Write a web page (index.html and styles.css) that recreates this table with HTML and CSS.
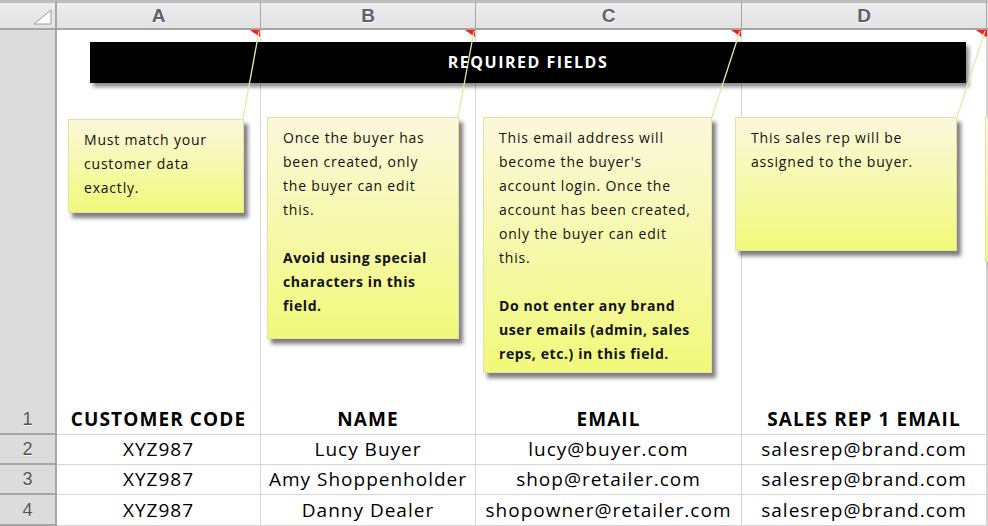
FILE: index.html
```html
<!DOCTYPE html>
<html>
<head>
<meta charset="utf-8">
<link rel="stylesheet" href="styles.css">
</head>
<body>
<div class="sheet">
  <div class="grid">
    <div class="ch corner">
      <svg class="corner-tri" width="20" height="16" viewBox="0 0 20 16"><polygon points="19,1 19,15 2,15" fill="#ffffff" stroke="#9a9a9a" stroke-width="1"/></svg>
    </div>
    <div class="ch">A</div>
    <div class="ch">B</div>
    <div class="ch">C</div>
    <div class="ch">D</div>
    <div class="ch ch-last"></div>

    <div class="rh">1</div>
    <div class="cell head flag">CUSTOMER CODE</div>
    <div class="cell head flag">NAME</div>
    <div class="cell head flag">EMAIL</div>
    <div class="cell head flag">SALES REP 1 EMAIL</div>
    <div class="cell head flag"></div>

    <div class="rh">2</div>
    <div class="cell">XYZ987</div>
    <div class="cell">Lucy Buyer</div>
    <div class="cell">lucy@buyer.com</div>
    <div class="cell">salesrep@brand.com</div>
    <div class="cell"></div>

    <div class="rh">3</div>
    <div class="cell">XYZ987</div>
    <div class="cell">Amy Shoppenholder</div>
    <div class="cell">shop@retailer.com</div>
    <div class="cell">salesrep@brand.com</div>
    <div class="cell"></div>

    <div class="rh">4</div>
    <div class="cell">XYZ987</div>
    <div class="cell">Danny Dealer</div>
    <div class="cell">shopowner@retailer.com</div>
    <div class="cell">salesrep@brand.com</div>
    <div class="cell"></div>
  </div>

  <div class="banner">REQUIRED FIELDS</div>

  <svg class="connectors" width="988" height="526" viewBox="0 0 988 526">
    <line x1="259" y1="31" x2="243" y2="119"/>
    <line x1="474" y1="31" x2="458" y2="117"/>
    <line x1="740" y1="31" x2="712" y2="117"/>
    <line x1="985" y1="31" x2="957" y2="117"/>
  </svg>

  <div class="note note-a">Must match your<br>customer data<br>exactly.</div>
  <div class="note note-b">Once the buyer has<br>been created, only<br>the buyer can edit<br>this.<br><br><b>Avoid using special<br>characters in this<br>field.</b></div>
  <div class="note note-c">This email address will<br>become the buyer's<br>account login. Once the<br>account has been created,<br>only the buyer can edit<br>this.<br><br><b>Do not enter any brand<br>user emails (admin, sales<br>reps, etc.) in this field.</b></div>
  <div class="note note-d">This sales rep will be<br>assigned to the buyer.</div>
  <div class="note note-e"></div>
</div>
</body>
</html>
```

FILE: styles.css
```css
html, body {
  margin: 0;
  padding: 0;
  background: #ffffff;
}

.sheet {
  position: relative;
  width: 988px;
  height: 526px;
  overflow: hidden;
  font-family: "Open Sans", "Lato", sans-serif;
}

.grid {
  display: grid;
  grid-template-columns: 57px 204px 215px 266px 245px 1fr;
  grid-template-rows: 30px 405px 30px 30px 31px;
}

.ch {
  box-sizing: border-box;
  border-top: 3px solid #bcbcbc;
  border-bottom: 2px solid #a6a6a6;
  border-right: 1px solid #a6a6a6;
  background: linear-gradient(#ededed, #e2e2e2);
  display: flex;
  align-items: center;
  justify-content: center;
  font-family: "Liberation Sans", "DejaVu Sans", sans-serif;
  font-size: 19px;
  font-weight: 700;
  color: #5e616b;
  text-shadow: 0 1px 0 #ffffff;
}

.ch.corner {
  border-right: 2px solid #a6a6a6;
  position: relative;
  justify-content: flex-end;
  align-items: flex-start;
  padding: 6px 3px 0 0;
}

.ch-last {
  border-right: none;
}

.rh {
  box-sizing: border-box;
  background: #dcdcdc;
  border-right: 2px solid #a6a6a6;
  border-bottom: 2px solid #a6a6a6;
  display: flex;
  align-items: flex-end;
  justify-content: center;
  font-family: "Liberation Sans", "DejaVu Sans", sans-serif;
  font-size: 18px;
  line-height: 28px;
  color: #555555;
  text-shadow: 0 1px 0 #f4f4f4;
}

.cell {
  box-sizing: border-box;
  border-right: 1px solid #d4d4d4;
  border-bottom: 1px solid #d4d4d4;
  display: flex;
  align-items: flex-end;
  justify-content: center;
  font-size: 19px;
  font-weight: 500;
  line-height: 29px;
  letter-spacing: 1px;
  color: #000000;
  white-space: nowrap;
}

.cell.head {
  font-weight: 700;
  letter-spacing: 1.1px;
  position: relative;
}

.flag::after {
  content: "";
  position: absolute;
  top: 0;
  right: 0;
  border-top: 7px solid #ff1a1a;
  border-left: 10px solid transparent;
}

.banner {
  position: absolute;
  left: 90px;
  top: 42px;
  width: 876px;
  height: 41px;
  background: #000000;
  box-shadow: 3px 4px 4px rgba(0, 0, 0, 0.45);
  color: #ffffff;
  font-weight: 700;
  font-size: 16px;
  letter-spacing: 1.5px;
  display: flex;
  align-items: center;
  justify-content: center;
  padding-bottom: 2px;
  box-sizing: border-box;
}

.connectors {
  position: absolute;
  left: 0;
  top: 0;
  pointer-events: none;
}

.connectors line {
  stroke: #e8e8a4;
  stroke-width: 1.3;
}

.note {
  position: absolute;
  box-sizing: border-box;
  top: 117px;
  padding: 8px 10px 0 15px;
  background: linear-gradient(#fbf8dc, #f1f97a);
  border: 1px solid #e2e1a6;
  box-shadow: 4px 5px 4px rgba(0, 0, 0, 0.5);
  font-size: 14px;
  font-weight: 500;
  line-height: 24px;
  letter-spacing: 0.8px;
  color: #111111;
  white-space: nowrap;
}

.note b {
  font-weight: 700;
  letter-spacing: 0.6px;
}

.note-a {
  left: 68px;
  top: 119px;
  width: 176px;
  height: 94px;
}

.note-b {
  left: 267px;
  width: 192px;
  height: 222px;
}

.note-c {
  left: 483px;
  width: 229px;
  height: 256px;
}

.note-d {
  left: 735px;
  width: 222px;
  height: 134px;
}

.note-e {
  left: 985px;
  width: 200px;
  height: 145px;
}
```
